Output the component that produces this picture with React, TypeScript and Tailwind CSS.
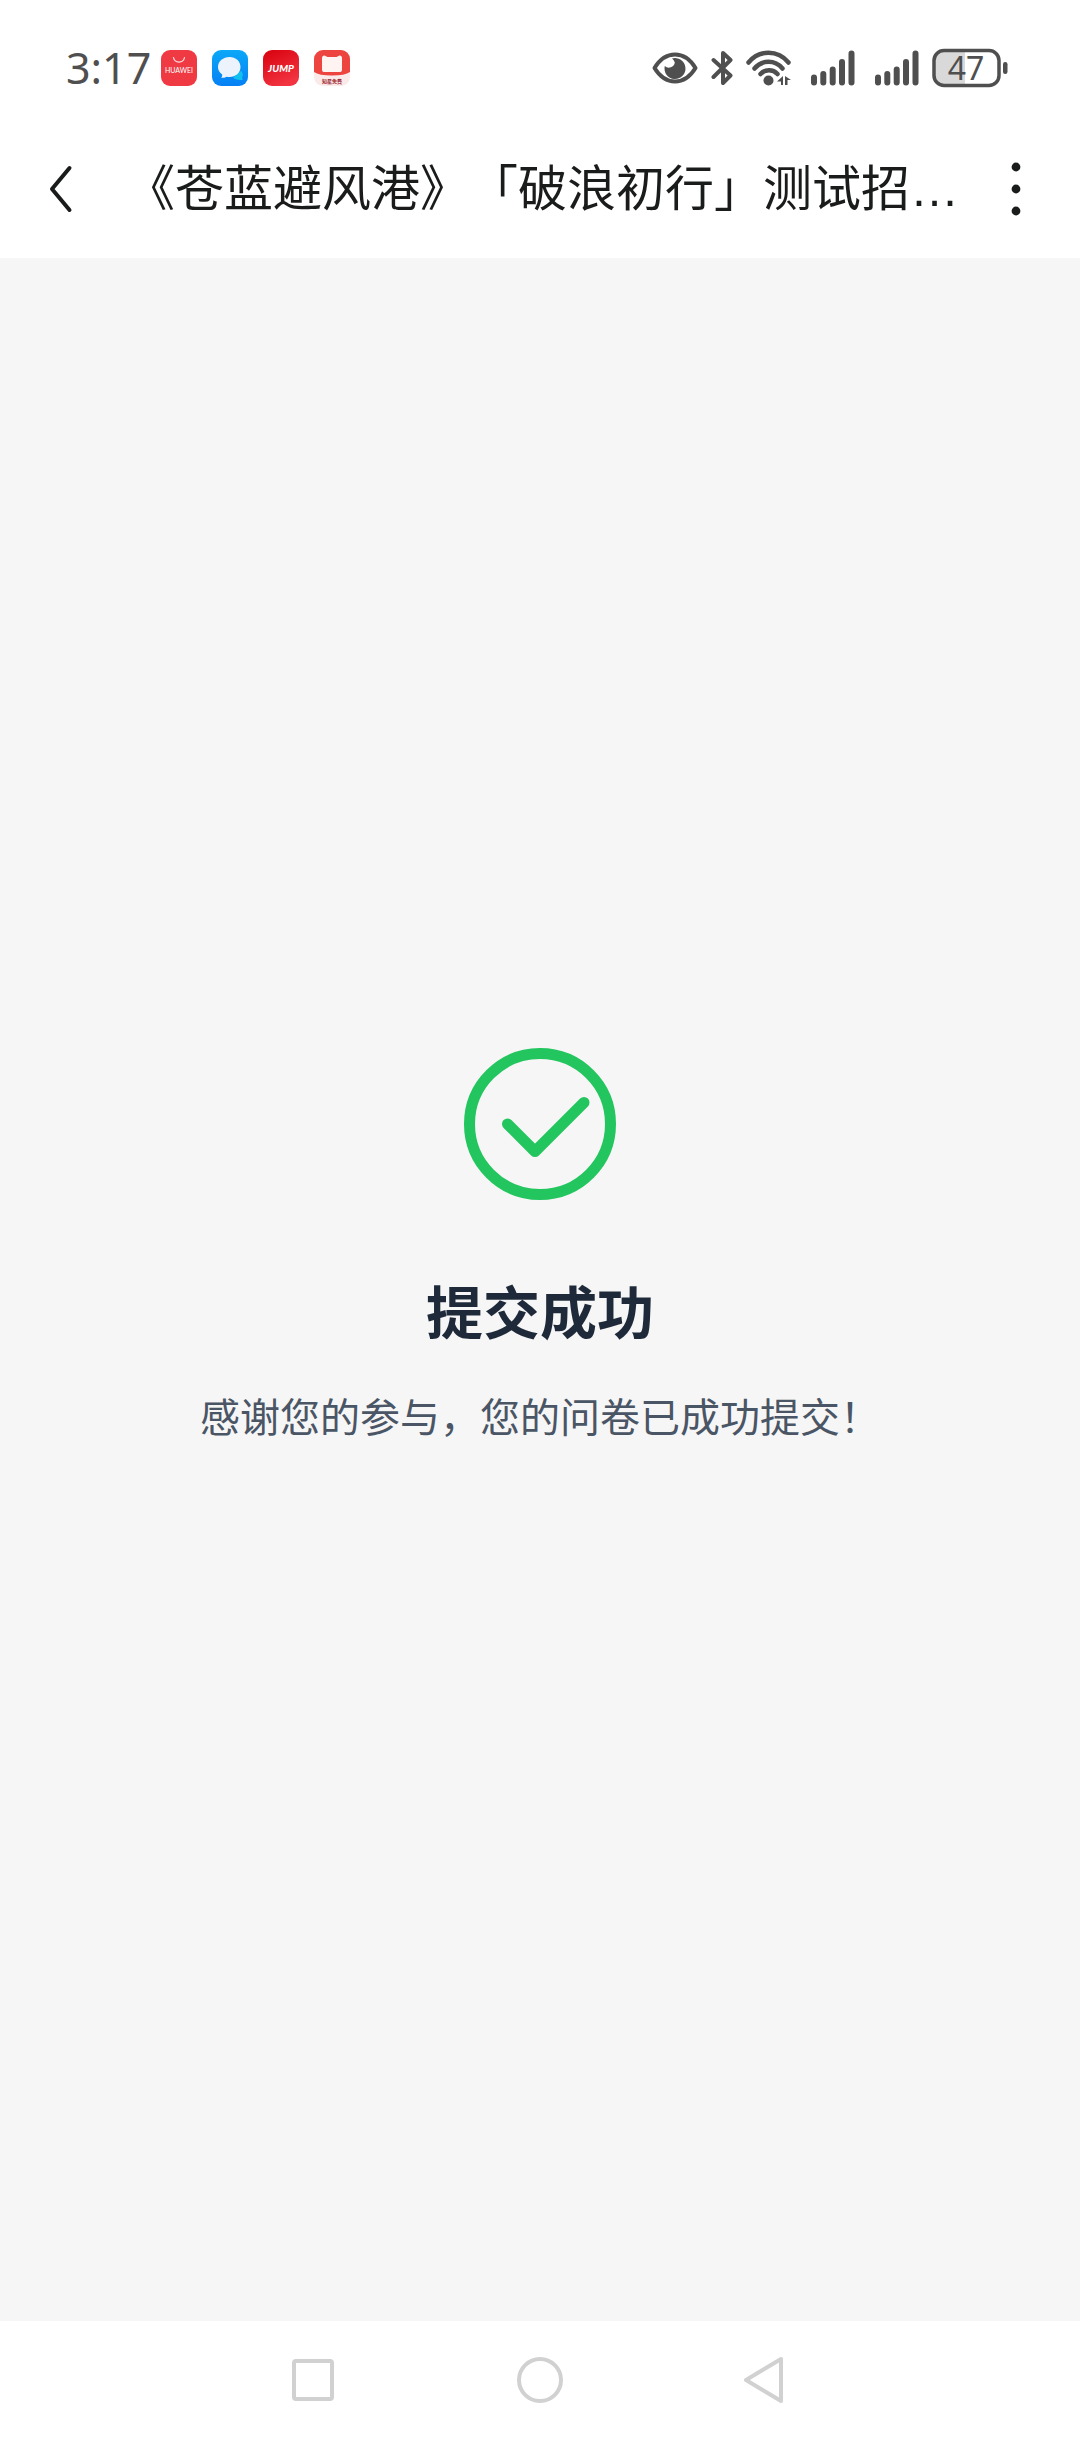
import type { ReactNode } from "react";

function AppBadges() {
  return (
    <div className="flex items-center gap-[15px]">
      <svg className="size-9" viewBox="0 0 36 36">
        <rect width="36" height="36" rx="9" fill="#f03a43" />
        <path d="M12.5 7.5a5.600 5.600 0 0 0 11 0" fill="none" stroke="#fff" strokeOpacity=".85" strokeWidth="1.200" strokeLinecap="round" />
        <text x="18" y="23" textAnchor="middle" fontSize="7" fill="#fff" className="font-['Lato',sans-serif]">HUAWEI</text>
      </svg>
      <svg className="size-9" viewBox="0 0 36 36">
        <defs>
          <linearGradient id="chatBg" x1="0" y1="0" x2="0" y2="1">
            <stop offset="0" stopColor="#0ba8f8" />
            <stop offset="1" stopColor="#0580f4" />
          </linearGradient>
        </defs>
        <rect width="36" height="36" rx="9" fill="url(#chatBg)" />
        <path d="M29 21c2.500 2 2 5 1 6.500l.8 2.200c-3 .4-8 .3-9.600-2.200z" fill="#12c0ee" />
        <path d="M17.500 7C23.800 7 28.500 11.300 28.500 17S23.800 27 17.500 27c-1 0-2 0-3-.3-1.600 1-3.500 1.300-5.500 1.100 1-1 1.300-2 1.200-3.400C7.600 22.600 6 20 6 17 6 11.300 11.200 7 17.500 7z" fill="#edf3fc" />
      </svg>
      <svg className="size-9" viewBox="0 0 36 36">
        <defs>
          <linearGradient id="jumpBg" x1="0" y1="0" x2="0.5" y2="1">
            <stop offset="0" stopColor="#d8000d" />
            <stop offset="1" stopColor="#f23340" />
          </linearGradient>
        </defs>
        <rect width="36" height="36" rx="9" fill="url(#jumpBg)" />
        <text x="18" y="22" textAnchor="middle" fontSize="10" fontWeight="900" fontStyle="italic" fill="#fff" className="font-['Lato',sans-serif]">JUMP</text>
      </svg>
      <svg className="size-9" viewBox="0 0 36 36">
        <defs>
          <clipPath id="readerClip">
            <rect width="36" height="36" rx="9" />
          </clipPath>
        </defs>
        <g clipPath="url(#readerClip)">
          <rect width="36" height="36" fill="#fbeaea" />
          <path d="M0 0h36v22q-5 3.500-18 3.500T0 22z" fill="#ee4440" />
          <path d="M8 8q0-2.500 2.500-2.500l3 1.500h9l3-1.500Q28 5.500 28 8v12q0 2-2 2H10q-2 0-2-2z" fill="#fff4f1" />
          <text x="18" y="32.5" textAnchor="middle" fontSize="5" fontWeight="700" fill="#9c2730" className="font-['Noto_Sans_CJK_SC',sans-serif]">知星免费</text>
        </g>
      </svg>
    </div>
  );
}

function SignalBars() {
  return (
    <svg className="h-9 w-11" viewBox="0 0 44 36" stroke="#4f4f4f" strokeWidth="6" strokeLinecap="round">
      <path d="M3 27.500v5M12.300 24v8.500M21.700 19.500v13M31 12v20.500M40.500 3.500v29" />
    </svg>
  );
}

function StatusBar() {
  return (
    <div className="flex h-[135px] items-center justify-between pr-[72px] pl-[66px] text-[#4f4f4f]">
      <div className="flex items-center gap-[10px]">
        <span className="font-['Noto_Sans',sans-serif] text-[43px] leading-none">3:17</span>
        <AppBadges />
      </div>
      <div className="flex items-center gap-[13px]">
        <svg className="h-9 w-[46px]" viewBox="0 0 46 36">
          <path d="M2.500 18C8 9 15 4.500 23 4.500S38 9 43.500 18C38 27 31 31.500 23 31.500S8 27 2.500 18z" fill="none" stroke="currentColor" strokeWidth="4" strokeLinejoin="round" />
          <path d="M20 8.500A10.500 10.500 0 1 1 12.800 16a6 6 0 0 0 10-3.500q-.8-2.500-2.800-4z" fill="currentColor" />
        </svg>
        <svg className="h-9 w-[22px]" viewBox="0 0 22 36" fill="none" stroke="currentColor" strokeWidth="4" strokeLinecap="round" strokeLinejoin="round">
          <path d="M2.500 10 19.500 25.500 12 33V3l7.500 7L2.500 27" />
        </svg>
        <svg className="h-9 w-[45px]" viewBox="0 0 45 36" fill="none" stroke="currentColor" strokeWidth="4.500" strokeLinecap="round">
          <path d="M2.500 12.500c10.500-13 29.500-13 40 0M8.500 18.500c7.500-9 20.500-9 28 0M14.500 24c4.500-5 12.500-5 17 0" />
          <circle cx="22.5" cy="30.5" r="5" fill="currentColor" stroke="none" />
          <path d="M37 26v9h-2v-3.500h-4zM39 26l6 4h-3.500v5H39z" fill="currentColor" stroke="none" />
        </svg>
        <div className="flex gap-5 pl-[7px]">
          <SignalBars />
          <SignalBars />
        </div>
        <svg className="h-12 w-[76px]" viewBox="0 -4 76 48">
          <path d="M12 2h21v36H12Q2 38 2 28V12Q2 2 12 2z" fill="#d9d9d9" />
          <rect x="2" y="2.5" width="65" height="35" rx="10" fill="none" stroke="currentColor" strokeWidth="3.500" />
          <rect x="71" y="14" width="4.5" height="12" rx="2.200" fill="currentColor" />
          <text x="34" y="31.5" textAnchor="middle" fontSize="32" fill="currentColor" className="font-['Noto_Sans',sans-serif]">47</text>
        </svg>
      </div>
    </div>
  );
}

function NavButton({ label, children }: { label: string; children: ReactNode }) {
  return (
    <button type="button" aria-label={label} className="flex items-center justify-center">
      <svg className="size-12" viewBox="0 0 48 48" fill="none" stroke="#d1d1d1" strokeWidth="4" strokeLinejoin="round">
        {children}
      </svg>
    </button>
  );
}

export default function App() {
  return (
    <div className="flex min-h-screen flex-col bg-white font-['Liberation_Sans','Noto_Sans_CJK_SC',sans-serif]">
      <StatusBar />
      <header className="flex items-center pr-10 pb-[15px] pl-9 text-[#191c1b]">
        <button type="button" aria-label="返回" className="flex h-[108px] w-[50px] shrink-0 items-center justify-center">
          <svg className="h-12 w-[50px]" viewBox="0 0 50 48" fill="none" stroke="currentColor" strokeWidth="4" strokeLinecap="round" strokeLinejoin="round">
            <path d="M33.500 3 16 24l17.500 21" />
          </svg>
        </button>
        <h1 className="ml-10 min-w-0 flex-1 truncate text-[49px] leading-[72px] [text-spacing-trim:space-all]">
          《苍蓝避风港》「破浪初行」测试招…
        </h1>
        <button type="button" aria-label="更多" className="flex h-[108px] w-12 shrink-0 items-center justify-center">
          <svg className="h-14 w-12" viewBox="0 0 48 56" fill="currentColor">
            <circle cx="24" cy="6" r="4.400" />
            <circle cx="24" cy="28" r="4.400" />
            <circle cx="24" cy="50" r="4.400" />
          </svg>
        </button>
      </header>

      <main className="flex flex-1 flex-col items-center justify-center bg-[#f6f6f6] pb-[84px] text-center">
        <svg className="size-[152px]" viewBox="0 0 152 152" fill="none" stroke="#22c55e" strokeWidth="11" strokeLinecap="round" strokeLinejoin="round">
          <circle cx="76" cy="76" r="70.500" />
          <path d="m43.500 76 27.500 27.500 49-49" />
        </svg>
        <h2 className="mt-[74px] text-[57px] leading-[80px] font-bold text-gray-800">提交成功</h2>
        <p className="mt-[34px] text-[40px] leading-[60px] text-gray-600">
          感谢您的参与，您的问卷已成功提交！
        </p>
      </main>

      <nav className="grid h-[117px] grid-cols-3 px-[18.5%]">
        <NavButton label="最近任务">
          <rect x="5" y="5" width="38" height="38" rx="2" />
        </NavButton>
        <NavButton label="主屏幕">
          <circle cx="24" cy="24" r="21" />
        </NavButton>
        <NavButton label="返回">
          <path d="M3 24 38 3v42z" />
        </NavButton>
      </nav>
    </div>
  );
}
